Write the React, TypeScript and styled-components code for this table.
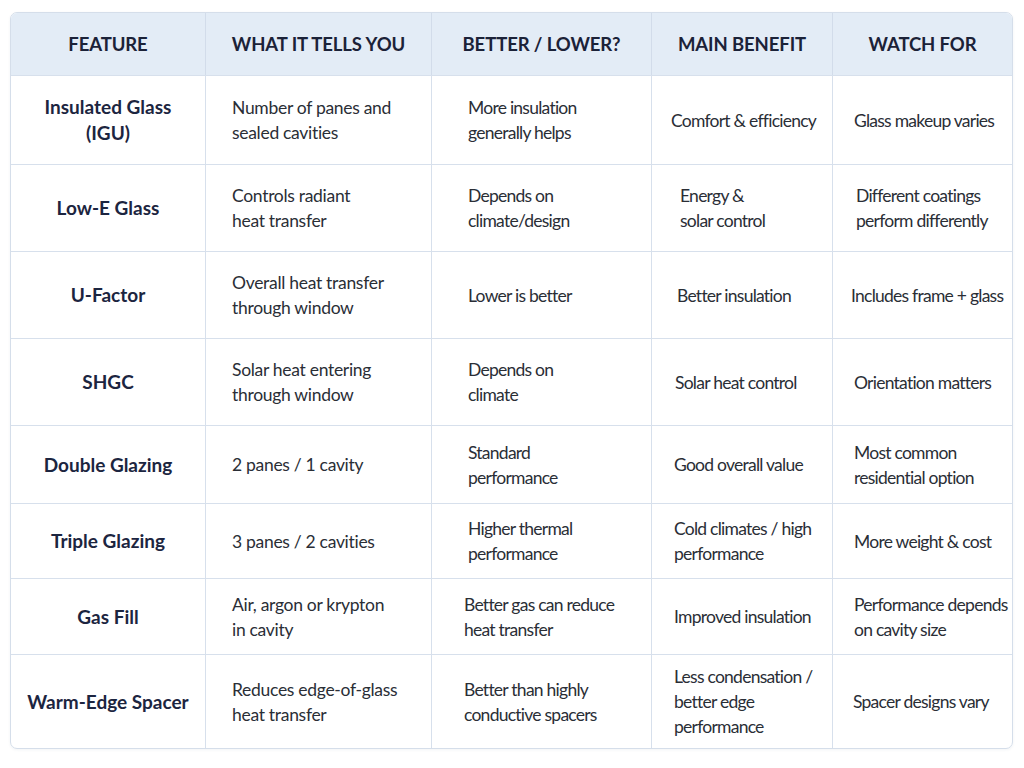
import React from "react";
import styled, { createGlobalStyle } from "styled-components";

const Global = createGlobalStyle`
  html, body { margin: 0; padding: 0; background: #ffffff; }
  body { font-family: Lato, "Open Sans", sans-serif; }
`;

const Page = styled.div`
  padding: 12px 11px 20px 10px;
`;

const Table = styled.div`
  display: grid;
  grid-template-columns: 194px 226px 220px 181px 1fr;
  grid-template-rows: 62px 89px 87px 87px 87px 78px 75px 76px 94px;
  width: 1003px;
  box-sizing: border-box;
  border: 1px solid #d5deea;
  border-radius: 7px;
  overflow: hidden;
  box-shadow: 0 1px 3px rgba(40, 60, 100, 0.06);
`;

const HeadCell = styled.div<{ $first?: boolean }>`
  display: flex;
  align-items: center;
  justify-content: center;
  background: #e3ecf6;
  border-left: ${(p) => (p.$first ? "none" : "1px solid #d2dcea")};
  color: #1b2238;
  font-weight: 700;
  font-size: 18.5px;
  letter-spacing: -0.1px;
`;

const FeatureCell = styled.div`
  display: flex;
  align-items: center;
  justify-content: center;
  text-align: center;
  border-top: 1px solid #d7e0ec;
  color: #1c2540;
  font-weight: 700;
  font-size: 19px;
  line-height: 26px;
  padding: 0 4px;
  white-space: nowrap;
`;

const Cell = styled.div<{ $pad: number; $tight?: boolean }>`
  display: flex;
  align-items: center;
  border-top: 1px solid #d7e0ec;
  border-left: 1px solid #d7e0ec;
  color: #2a2e36;
  font-size: 17.5px;
  line-height: 25px;
  letter-spacing: ${(p) => (p.$tight ? "-0.75px" : "-0.3px")};
  white-space: nowrap;
  padding-left: ${(p) => p.$pad}px;
`;

const Lines = styled.div`
  display: flex;
  flex-direction: column;
`;

const headers = ["FEATURE", "WHAT IT TELLS YOU", "BETTER / LOWER?", "MAIN BENEFIT", "WATCH FOR"];

type Row = { feature: string[]; cells: { lines: string[]; pad?: number }[] };

const rows: Row[] = [
  {
    feature: ["Insulated Glass", "(IGU)"],
    cells: [
      { lines: ["Number of panes and", "sealed cavities"] },
      { lines: ["More insulation", "generally helps"] },
      { lines: ["Comfort & efficiency"], pad: 19 },
      { lines: ["Glass makeup varies"] },
    ],
  },
  {
    feature: ["Low-E Glass"],
    cells: [
      { lines: ["Controls radiant", "heat transfer"] },
      { lines: ["Depends on", "climate/design"] },
      { lines: ["Energy &", "solar control"], pad: 28 },
      { lines: ["Different coatings", "perform differently"], pad: 23 },
    ],
  },
  {
    feature: ["U-Factor"],
    cells: [
      { lines: ["Overall heat transfer", "through window"] },
      { lines: ["Lower is better"] },
      { lines: ["Better insulation"], pad: 25 },
      { lines: ["Includes frame + glass"], pad: 18 },
    ],
  },
  {
    feature: ["SHGC"],
    cells: [
      { lines: ["Solar heat entering", "through window"] },
      { lines: ["Depends on", "climate"] },
      { lines: ["Solar heat control"], pad: 23 },
      { lines: ["Orientation matters"], pad: 21 },
    ],
  },
  {
    feature: ["Double Glazing"],
    cells: [
      { lines: ["2 panes / 1 cavity"] },
      { lines: ["Standard", "performance"] },
      { lines: ["Good overall value"], pad: 22 },
      { lines: ["Most common", "residential option"], pad: 21 },
    ],
  },
  {
    feature: ["Triple Glazing"],
    cells: [
      { lines: ["3 panes / 2 cavities"] },
      { lines: ["Higher thermal", "performance"] },
      { lines: ["Cold climates / high", "performance"], pad: 22 },
      { lines: ["More weight & cost"], pad: 21 },
    ],
  },
  {
    feature: ["Gas Fill"],
    cells: [
      { lines: ["Air, argon or krypton", "in cavity"] },
      { lines: ["Better gas can reduce", "heat transfer"], pad: 32 },
      { lines: ["Improved insulation"], pad: 22 },
      { lines: ["Performance depends", "on cavity size"], pad: 21 },
    ],
  },
  {
    feature: ["Warm-Edge Spacer"],
    cells: [
      { lines: ["Reduces edge-of-glass", "heat transfer"] },
      { lines: ["Better than highly", "conductive spacers"], pad: 32 },
      { lines: ["Less condensation /", "better edge", "performance"], pad: 22 },
      { lines: ["Spacer designs vary"], pad: 20 },
    ],
  },
];

const defaultPads = [26, 36, 22, 21];

export default function App() {
  return (
    <Page>
      <Global />
      <Table>
        {headers.map((h, i) => (
          <HeadCell key={h} $first={i === 0}>
            {h}
          </HeadCell>
        ))}
        {rows.map((r) => (
          <React.Fragment key={r.feature.join(" ")}>
            <FeatureCell>
              <Lines>
                {r.feature.map((l) => (
                  <span key={l}>{l}</span>
                ))}
              </Lines>
            </FeatureCell>
            {r.cells.map((c, i) => (
              <Cell key={i} $pad={c.pad ?? defaultPads[i]} $tight={i > 0}>
                <Lines>
                  {c.lines.map((l) => (
                    <span key={l}>{l}</span>
                  ))}
                </Lines>
              </Cell>
            ))}
          </React.Fragment>
        ))}
      </Table>
    </Page>
  );
}
